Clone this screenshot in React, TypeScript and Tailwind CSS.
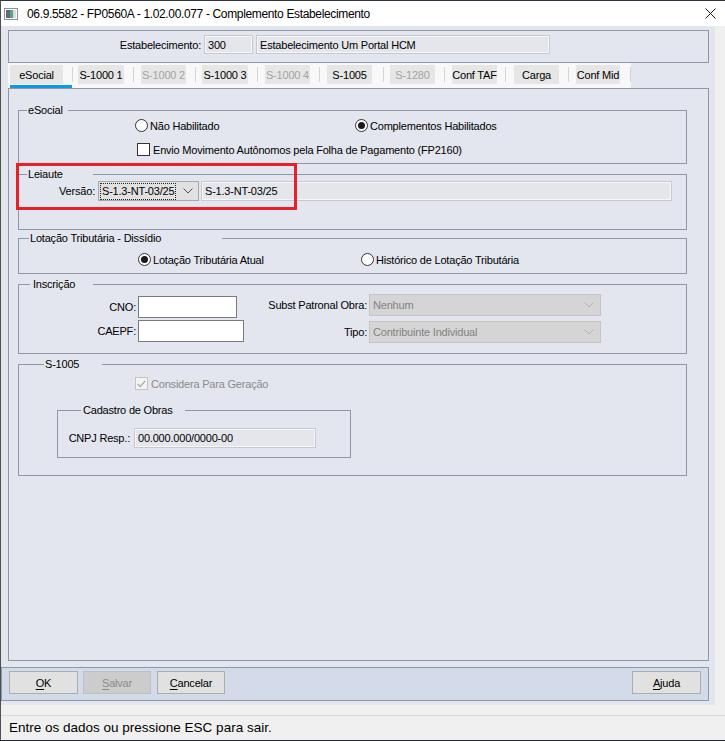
import React from 'react';

type Tab = { label: string; wrap: string; box: string; disabled?: boolean; active?: boolean };

const tabs: Tab[] = [
  { label: 'eSocial', wrap: 'ml-[2px] w-[62px]', box: 'w-[53px]', active: true },
  { label: 'S-1000 1', wrap: 'ml-[5px] w-[55px]', box: 'w-[46px]' },
  { label: 'S-1000 2', wrap: 'ml-[7px] w-[54px]', box: 'w-[45px]', disabled: true },
  { label: 'S-1000 3', wrap: 'ml-[6px] w-[55px]', box: 'w-[46px]' },
  { label: 'S-1000 4', wrap: 'ml-[7px] w-[54px]', box: 'w-[45px]', disabled: true },
  { label: 'S-1005', wrap: 'ml-[7px] w-[56px]', box: 'w-[45px]' },
  { label: 'S-1280', wrap: 'ml-[6px] w-[54px]', box: 'w-[45px]', disabled: true },
  { label: 'Conf TAF', wrap: 'ml-[7px] w-[53px]', box: 'w-[45px]' },
  { label: 'Carga', wrap: 'ml-[8px] w-[54px]', box: 'w-[45px]' },
  { label: 'Conf Mid', wrap: 'ml-[7px] w-[54px]', box: 'w-[44px]' },
];

function Chevron({ light }: { light?: boolean }) {
  return (
    <svg width="10" height="6" viewBox="0 0 10 6" className="shrink-0">
      <polyline
        points="0.5,0.5 5,5 9.5,0.5"
        fill="none"
        stroke={light ? '#b4b4b4' : '#505050'}
        strokeWidth="1"
      />
    </svg>
  );
}

function Radio({ checked, label }: { checked?: boolean; label: string }) {
  return (
    <div className="flex h-[13px] items-center">
      <span className="flex h-[13px] w-[13px] shrink-0 items-center justify-center rounded-full border border-[#333333] bg-white">
        {checked && <span className="h-[7px] w-[7px] rounded-full bg-[#1b1b1b]" />}
      </span>
      <span className="ml-[2px] whitespace-nowrap">{label}</span>
    </div>
  );
}

function Group({
  title,
  titleClass,
  className,
  children,
}: {
  title: string;
  titleClass: string;
  className: string;
  children?: React.ReactNode;
}) {
  return (
    <div className={`relative border border-[#8e98a9] ${className}`}>
      <span className={`absolute -top-[8px] whitespace-nowrap bg-[#e3e6ee] leading-[15px] ${titleClass}`}>
        {title}
      </span>
      {children}
    </div>
  );
}

function ReadOnly({ value, className }: { value: string; className: string }) {
  return (
    <div
      className={`flex items-center whitespace-nowrap border border-[#c6c9d0] bg-[#e4e6ec] pl-[3px] shadow-[inset_0_0_0_1px_#f7f7f9] ${className}`}
    >
      {value}
    </div>
  );
}

function DisabledSelect({ value }: { value: string }) {
  return (
    <div className="flex h-[22px] w-[232px] items-center justify-between border border-[#c4c4c4] bg-[#d5d5d5] pl-[3px] pr-[6px] text-[#838383]">
      <span className="whitespace-nowrap">{value}</span>
      <Chevron light />
    </div>
  );
}

function Button({ label, disabled, className }: { label: string; disabled?: boolean; className: string }) {
  return (
    <div
      className={`flex h-[23px] items-center justify-center border ${
        disabled ? 'border-[#bfbfbf] bg-[#cccccc] text-[#8b8b8b]' : 'border-[#adadad] bg-[#e1e1e1]'
      } ${className}`}
    >
      <span>
        <span className="underline underline-offset-[2px]">{label[0]}</span>
        {label.slice(1)}
      </span>
    </div>
  );
}

export default function App() {
  return (
    <div className="relative flex h-[741px] w-[725px] flex-col overflow-hidden border-l border-t border-b border-l-[#505050] border-t-[#2d3642] border-b-[#1f2a36] bg-[#f0f0f0] font-['Liberation_Sans',Arial,sans-serif] text-[11px] leading-[14px] tracking-[-0.2px] text-black">
      {/* title bar */}
      <div className="flex h-[25px] shrink-0 items-center bg-white">
        <svg width="14" height="12" viewBox="0 0 14 12" className="ml-[3px]">
          <rect x="0.5" y="0.5" width="13" height="11" fill="#ffffff" stroke="#8b9099" />
          <rect x="2" y="2" width="4" height="8" fill="#5d6b75" />
          <rect x="6" y="2" width="3" height="8" fill="#5f9e86" />
          <rect x="9" y="2" width="3" height="8" fill="#d9dde2" />
        </svg>
        <span className="ml-[9px] text-[12px] tracking-[-0.35px]">
          06.9.5582 - FP0560A - 1.02.00.077 - Complemento Estabelecimento
        </span>
        <svg width="11" height="11" viewBox="0 0 11 11" className="ml-auto mr-[9px]">
          <path d="M0.5 0.5 L10.5 10.5 M10.5 0.5 L0.5 10.5" stroke="#1a1a1a" strokeWidth="1" />
        </svg>
      </div>

      <div className="flex h-[679px] shrink-0">
        <div className="flex w-[714px] flex-col bg-[#e3e6ee] pt-[4px]">
          {/* establishment header */}
          <div className="ml-[7px] flex h-[33px] w-[701px] items-start border border-[#8e98a9] pt-[4px]">
            <div className="flex h-[19px] items-center">
              <span className="w-[192px] text-right">Estabelecimento:</span>
              <ReadOnly value="300" className="ml-[3px] h-[19px] w-[49px]" />
              <ReadOnly value="Estabelecimento Um Portal HCM" className="ml-[3px] h-[19px] w-[294px]" />
            </div>
          </div>

          {/* tabs */}
          <div className="ml-[7px] flex h-[25px] w-[623px] items-start bg-[#f8f8f9] pt-[2px]">
            {tabs.map((t) => (
              <React.Fragment key={t.label}>
                <div className={`flex flex-col ${t.wrap}`}>
                  <div
                    className={`flex h-[19px] items-center justify-center whitespace-nowrap bg-[#e6e6e6] ${t.box} ${
                      t.disabled ? 'text-[#a3a3a3]' : ''
                    }`}
                  >
                    {t.label}
                  </div>
                  {t.active && <div className="mt-[1px] h-[3px] w-full bg-[#0a9be2]" />}
                </div>
                <div className="mt-[2px] h-[15px] w-px bg-[#d4d4d4]" />
              </React.Fragment>
            ))}
          </div>

          {/* tab panel */}
          <div className="ml-[7px] flex h-[573px] w-[701px] flex-col border border-[#8e98a9] pl-[9px] pt-[21px]">
            <Group title="eSocial" titleClass="left-[8px] w-[41px] pl-[1px]" className="h-[54px] w-[669px]">
              <div className="pl-[116px] pt-[8px]">
                <div className="flex h-[13px]">
                  <div className="w-[220px]">
                    <Radio label="Não Habilitado" />
                  </div>
                  <Radio checked label="Complementos Habilitados" />
                </div>
                <div className="mt-[11px] flex h-[13px] items-center pl-[2px]">
                  <span className="h-[13px] w-[13px] shrink-0 border border-[#333333] bg-white" />
                  <span className="ml-[3px] whitespace-nowrap">
                    Envio Movimento Autônomos pela Folha de Pagamento (FP2160)
                  </span>
                </div>
              </div>
            </Group>

            <Group title="Leiaute" titleClass="left-[8px] w-[66px] pl-[1px]" className="mt-[10px] h-[56px] w-[669px]">
              <div className="mt-[6px] flex h-[20px] items-center">
                <span className="w-[76px] text-right">Versão:</span>
                <div className="ml-[3px] flex h-[20px] w-[101px] items-center justify-between border border-[#a9a9a9] bg-[#e1e1e1] pl-[1px] pr-[5px]">
                  <span className="whitespace-nowrap border border-dotted border-[#222222] px-[1px] leading-[15px]">
                    S-1.3-NT-03/25
                  </span>
                  <Chevron />
                </div>
                <ReadOnly value="S-1.3-NT-03/25" className="ml-[2px] h-[20px] w-[471px]" />
              </div>
            </Group>

            <Group
              title="Lotação Tributária - Dissídio"
              titleClass="left-[10px] w-[193px] pl-[1px]"
              className="mt-[8px] h-[36px] w-[669px]"
            >
              <div className="flex pl-[119px] pt-[14px]">
                <div className="w-[223px]">
                  <Radio checked label="Lotação Tributária Atual" />
                </div>
                <Radio label="Histórico de Lotação Tributária" />
              </div>
            </Group>

            <Group title="Inscrição" titleClass="left-[11px] w-[63px] pl-[3px]" className="mt-[10px] flex h-[70px] w-[669px]">
              <div className="w-[246px] pt-[11px]">
                <div className="flex h-[22px] items-center">
                  <span className="w-[117px] text-right">CNO:</span>
                  <div className="ml-[2px] h-[22px] w-[99px] border border-[#7a7a7a] bg-white" />
                </div>
                <div className="mt-[2px] flex h-[22px] items-center">
                  <span className="w-[117px] text-right">CAEPF:</span>
                  <div className="ml-[2px] h-[22px] w-[106px] border border-[#7a7a7a] bg-white" />
                </div>
              </div>
              <div className="pt-[9px]">
                <div className="flex h-[22px] items-center">
                  <span className="w-[102px] whitespace-nowrap text-right">Subst Patronal Obra:</span>
                  <div className="ml-[2px]">
                    <DisabledSelect value="Nenhum" />
                  </div>
                </div>
                <div className="mt-[5px] flex h-[22px] items-center">
                  <span className="w-[102px] text-right">Tipo:</span>
                  <div className="ml-[2px]">
                    <DisabledSelect value="Contribuinte Individual" />
                  </div>
                </div>
              </div>
            </Group>

            <Group title="S-1005" titleClass="left-[25px] w-[58px] pl-[1px]" className="mt-[10px] h-[112px] w-[669px]">
              <div className="flex h-[13px] items-center pl-[116px] mt-[12px]">
                <span className="flex h-[13px] w-[13px] shrink-0 items-center justify-center border border-[#c3c3c3] bg-[#f3f3f3]">
                  <svg width="9" height="8" viewBox="0 0 9 8">
                    <polyline points="0.8,4 3.3,6.6 8.2,0.8" fill="none" stroke="#a5a5a5" strokeWidth="1.3" />
                  </svg>
                </span>
                <span className="ml-[3px] whitespace-nowrap text-[#8a8a8a]">Considera Para Geração</span>
              </div>
              <Group
                title="Cadastro de Obras"
                titleClass="left-[23px] w-[104px] pl-[2px]"
                className="ml-[38px] mt-[20px] h-[48px] w-[294px]"
              >
                <div className="flex items-center pt-[17px]">
                  <span className="w-[72px] whitespace-nowrap text-right">CNPJ Resp.:</span>
                  <ReadOnly value="00.000.000/0000-00" className="ml-[4px] h-[20px] w-[182px]" />
                </div>
              </Group>
            </Group>
          </div>

          {/* action buttons */}
          <div className="mt-[6px] flex h-[34px] w-[708px] items-start border border-[#8d98aa] bg-[#d3dbeb] pl-[7px] pr-[7px] pt-[3px]">
            <Button label="OK" className="w-[69px]" />
            <Button label="Salvar" disabled className="ml-[5px] w-[68px]" />
            <Button label="Cancelar" className="ml-[6px] w-[68px]" />
            <Button label="Ajuda" className="ml-auto w-[69px]" />
          </div>
        </div>
        <div className="flex-1 bg-[#f0f0f0]" />
      </div>

      <div className="h-[10px] shrink-0" />
      <div className="flex h-[25px] shrink-0 items-center border-t border-[#d9d9d9] pl-[8px] text-[13.5px] tracking-normal">
        Entre os dados ou pressione ESC para sair.
      </div>

      {/* highlight frame over the layout version row */}
      <div className="absolute left-[15px] top-[162px] h-[47px] w-[281px] border-[3px] border-[#e8202a]" />
    </div>
  );
}
